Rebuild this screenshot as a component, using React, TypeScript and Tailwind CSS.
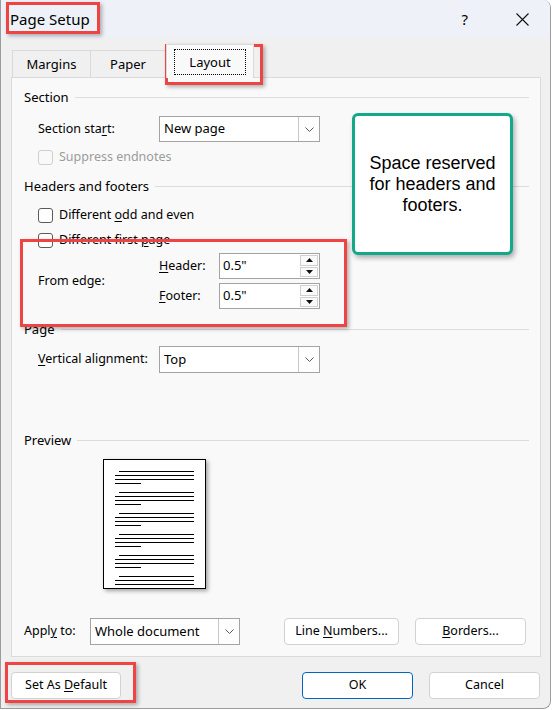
import React from "react";

const font = "font-['Segoe_UI','Noto_Sans',sans-serif]";

function U({ children }: { children: React.ReactNode }) {
  return <span className="underline underline-offset-[2px] decoration-[1px]">{children}</span>;
}

function Chevron() {
  return (
    <svg width="9" height="5" viewBox="0 0 9 5" fill="none">
      <path d="M0.5 0.5 L4.5 4.5 L8.5 0.5" stroke="#5a5a5a" strokeWidth="1" />
    </svg>
  );
}

function Select({ value, width, height = 26 }: { value: string; width: string; height?: number }) {
  return (
    <div className={`${width} flex border border-[#a3a3a3] bg-white`} style={{ height }}>
      <div className="flex-1 flex items-center pl-[4px] text-[13px] text-black">{value}</div>
      <div className="w-[21px] flex items-center justify-center border-l border-[#c8c8c8] bg-[#fdfdfd]">
        <Chevron />
      </div>
    </div>
  );
}

function Spin({ value }: { value: string }) {
  return (
    <div className="w-[101px] h-[26px] flex border border-[#a3a3a3] bg-white">
      <div className="flex-1 flex items-center pl-[3px] text-[13px] text-black">{value}</div>
      <div className="w-[20px] flex flex-col p-[1px] gap-[1px]">
        <div className="flex-1 flex items-center justify-center border border-[#d0d0d0] bg-[#fafafa]">
          <svg width="7" height="4" viewBox="0 0 7 4">
            <path d="M0 4 L3.5 0 L7 4 Z" fill="#111" />
          </svg>
        </div>
        <div className="flex-1 flex items-center justify-center border border-[#d0d0d0] bg-[#fafafa]">
          <svg width="7" height="4" viewBox="0 0 7 4">
            <path d="M0 0 L7 0 L3.5 4 Z" fill="#111" />
          </svg>
        </div>
      </div>
    </div>
  );
}

function Check({ label, disabled }: { label: React.ReactNode; disabled?: boolean }) {
  return (
    <div className="h-[16px] flex items-center pl-[14px] gap-[6px]">
      <div
        className={`w-[15px] h-[15px] rounded-[3px] border ${
          disabled ? "border-[#cfcfcf] bg-[#f9f9f9]" : "border-[#5c5c5c] bg-white"
        }`}
      />
      <span className={`text-[12.5px] ${disabled ? "text-[#9c9c9c]" : "text-black"}`}>{label}</span>
    </div>
  );
}

function GroupHead({ title, mt }: { title: string; mt: string }) {
  return (
    <div className={`${mt} h-[16px] flex items-center gap-[6px]`}>
      <span className="text-[13px] text-black leading-none">{title}</span>
      <div className="flex-1 h-px bg-[#dcdcdc]" />
    </div>
  );
}

function Button({
  children,
  width,
  primary,
}: {
  children: React.ReactNode;
  width: string;
  primary?: boolean;
}) {
  return (
    <div
      className={`${width} h-[27px] flex items-center justify-center rounded-[4px] bg-white text-[12.5px] text-black border ${
        primary ? "border-[#0067c0]" : "border-[#d2d2d2]"
      }`}
    >
      <span>{children}</span>
    </div>
  );
}

// Document thumbnail: paragraphs of four rules, the first indented, the last short
const paragraphs = [4, 4, 4, 4, 4, 3];

function PagePreview() {
  return (
    <div className="ml-[79px] mt-[11px] w-[103px] h-[130px] bg-white border border-black shadow-[2px_2px_4px_rgba(0,0,0,0.35)] pt-[11px] pl-[11px] pr-[11px] flex flex-col gap-[8px]">
      {paragraphs.map((n, p) => (
        <div key={p} className="flex flex-col gap-[3px]">
          {Array.from({ length: n }).map((_, i) => {
            const cls =
              i === 0
                ? "ml-[4px] h-px bg-black"
                : i === 3
                ? "w-[26px] h-px bg-black"
                : "h-px bg-black";
            return <div key={i} className={cls} />;
          })}
        </div>
      ))}
    </div>
  );
}

const label = "text-[12.5px] text-black";

export default function App() {
  return (
    <div className={`relative w-[552px] h-[710px] bg-white ${font} overflow-hidden`}>
      <div className="w-[551px] h-[709px] bg-[#f0f0f0] border-l border-r border-b border-[#9c9c9c] rounded-tr-[8px] rounded-br-[8px] overflow-hidden flex flex-col">
        {/* Title bar */}
        <div className="h-[38px] bg-[#eef2f8] flex items-center pl-[9px] pr-[21px]">
          <span className="text-[15px] text-black">Page Setup</span>
          <div className="flex-1" />
          <span className="text-[15px] text-black mr-[48px]">?</span>
          <svg width="13" height="13" viewBox="0 0 13 13">
            <path d="M0.5 0.5 L12.5 12.5 M12.5 0.5 L0.5 12.5" stroke="#111" strokeWidth="1.1" />
          </svg>
        </div>

        {/* Tabs */}
        <div className="mt-[6px] h-[33px] flex items-end pl-[11px]">
          <div className="w-[79px] h-[27px] pt-[2px] flex items-center justify-center border border-b-0 border-[#dadada] bg-[#f0f0f0] text-[13px] text-black">
            Margins
          </div>
          <div className="w-[75px] h-[27px] pt-[2px] flex items-center justify-center border border-l-0 border-b-0 border-[#dadada] bg-[#f0f0f0] text-[13px] text-black">
            Paper
          </div>
          <div className="relative z-10 w-[88px] h-[34px] -mb-px flex items-start justify-center pt-[4px] border border-b-0 border-[#dadada] bg-[#f9f9f9]">
            <div className="w-[72px] h-[26px] pt-[2px] flex items-center justify-center border border-dotted border-black text-[13px] text-black">
              Layout
            </div>
          </div>
        </div>

        {/* Layout panel */}
        <div className="ml-[10px] w-[530px] h-[580px] border border-[#dadada] bg-[#f9f9f9] pl-[12px] pr-[11px] flex flex-col">
          <GroupHead title="Section" mt="mt-[11px]" />

          <div className="mt-[11px] h-[26px] flex items-center pl-[14px]">
            <span className={`w-[121px] ${label}`}>
              Section sta<U>r</U>t:
            </span>
            <Select value="New page" width="w-[161px]" />
          </div>

          <div className="mt-[7px]">
            <Check label="Suppress endnotes" disabled />
          </div>

          <GroupHead title="Headers and footers" mt="mt-[13px]" />

          <div className="mt-[13px]">
            <Check
              label={
                <>
                  Different <U>o</U>dd and even
                </>
              }
            />
          </div>
          <div className="mt-[9px]">
            <Check
              label={
                <>
                  Different first <U>p</U>age
                </>
              }
            />
          </div>

          <div className="mt-[5px] h-[56px] flex items-center pl-[14px]">
            <span className={`w-[121px] ${label}`}>From edge:</span>
            <div className="flex flex-col gap-[4px]">
              <div className="flex items-center">
                <span className={`w-[60px] ${label}`}>
                  <U>H</U>eader:
                </span>
                <Spin value={'0.5"'} />
              </div>
              <div className="flex items-center">
                <span className={`w-[60px] ${label}`}>
                  <U>F</U>ooter:
                </span>
                <Spin value={'0.5"'} />
              </div>
            </div>
          </div>

          <GroupHead title="Page" mt="mt-[12px]" />

          <div className="mt-[9px] h-[27px] flex items-center pl-[14px]">
            <span className={`w-[121px] ${label}`}>
              <U>V</U>ertical alignment:
            </span>
            <Select value="Top" width="w-[161px]" height={27} />
          </div>

          <GroupHead title="Preview" mt="mt-[59px]" />

          <PagePreview />

          <div className="mt-[29px] h-[27px] flex items-center">
            <span className={`w-[66px] ${label}`}>
              Appl<U>y</U> to:
            </span>
            <Select value="Whole document" width="w-[150px]" height={27} />
            <div className="ml-[44px]">
              <Button width="w-[115px]">
                Line <U>N</U>umbers...
              </Button>
            </div>
            <div className="ml-[16px]">
              <Button width="w-[111px]">
                <U>B</U>orders...
              </Button>
            </div>
          </div>
        </div>

        {/* Dialog buttons */}
        <div className="mt-[15px] flex items-center pl-[10px]">
          <Button width="w-[110px]">
            Set As <U>D</U>efault
          </Button>
          <div className="ml-[181px]">
            <Button width="w-[111px]" primary>
              OK
            </Button>
          </div>
          <div className="ml-[16px]">
            <Button width="w-[111px]">Cancel</Button>
          </div>
        </div>
      </div>

      {/* Highlight frames */}
      <div className="absolute left-[6px] top-[2px] w-[94px] h-[32px] border-[3px] border-[#ef4444] shadow-[2px_2px_4px_rgba(0,0,0,0.3)]" />
      <div className="absolute left-[165px] top-[44px] w-[98px] h-[41px] border-[3px] border-[#ef4444] shadow-[2px_2px_4px_rgba(0,0,0,0.3)]" />
      <div className="absolute left-[20px] top-[239px] w-[327px] h-[88px] border-[3px] border-[#ef4444] shadow-[2px_2px_4px_rgba(0,0,0,0.3)]" />
      <div className="absolute left-[5px] top-[662px] w-[131px] h-[41px] border-[3px] border-[#ef4444] shadow-[2px_2px_4px_rgba(0,0,0,0.3)]" />

      {/* Callout */}
      <div className="absolute left-[352px] top-[113px] w-[161px] h-[142px] rounded-[6px] border-[3px] border-[#13a88a] bg-white shadow-[2px_3px_5px_rgba(0,0,0,0.3)] flex items-center justify-center">
        <p className="font-['Liberation_Sans',Arial,sans-serif] text-[18px] leading-[21px] text-black text-center">
          Space reserved
          <br />
          for headers and
          <br />
          footers.
        </p>
      </div>
    </div>
  );
}
